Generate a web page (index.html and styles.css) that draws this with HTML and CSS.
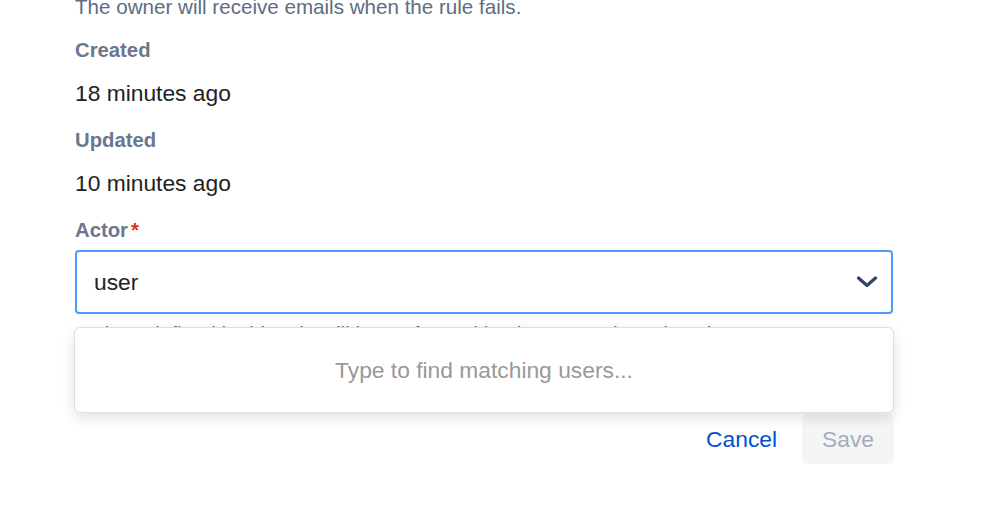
FILE: index.html
```html
<!DOCTYPE html>
<html lang="en">
<head>
<meta charset="utf-8">
<title>Rule details</title>
<link rel="stylesheet" href="styles.css">
</head>
<body>
<div class="page">
  <p class="help help-top">The owner will receive emails when the rule fails.</p>

  <div class="label label-first">Created</div>
  <div class="value">18 minutes ago</div>

  <div class="label">Updated</div>
  <div class="value">10 minutes ago</div>

  <div class="label">Actor<span class="req">*</span></div>
  <div class="field">
    <div class="select">
      <span class="select-value">user</span>
      <svg class="chevron" width="22" height="12" viewBox="0 0 22 12" aria-hidden="true">
        <path d="M2.5 2 L11 9.5 L19.5 2" fill="none" stroke="#344563" stroke-width="3.2" stroke-linecap="round" stroke-linejoin="round"/>
      </svg>
    </div>
    <div class="menu">
      <span class="menu-empty">Type to find matching users...</span>
    </div>
  </div>
  <p class="help help-field">Actions defined in this rule will be performed by the user selected as the actor.</p>

  <div class="actions">
    <button class="btn btn-link" type="button">Cancel</button>
    <button class="btn btn-disabled" type="button" disabled>Save</button>
  </div>
</div>
</body>
</html>
```

FILE: styles.css
```css
html, body {
  margin: 0;
  padding: 0;
  background: #ffffff;
}

body {
  font-family: "Liberation Sans", Arial, sans-serif;
  color: #222222;
  overflow: hidden;
}

.page {
  width: 818px;
  padding-left: 75px;
  display: flex;
  flex-direction: column;
}

.help {
  margin: 0;
  font-size: 20.6px;
  line-height: 24px;
  color: #5e6c84;
  white-space: nowrap;
}

.help-top {
  margin-top: -5px;
}

.help-field {
  margin-top: 8px;
}

.label {
  font-size: 20.3px;
  line-height: 24px;
  font-weight: 700;
  color: #6b778c;
  margin-top: 21px;
}

.label-first {
  margin-top: 19px;
}

.req {
  color: #de350b;
  margin-left: 3px;
}

.value {
  font-size: 22.8px;
  line-height: 28px;
  color: #222222;
  margin-top: 17px;
}

.field {
  position: relative;
  margin-top: 8px;
}

.select {
  box-sizing: border-box;
  height: 64px;
  border: 2px solid #4c9aff;
  border-radius: 4px;
  background: #ffffff;
  display: flex;
  align-items: center;
  justify-content: space-between;
  padding: 0 13px 0 17px;
}

.select-value {
  font-size: 22.8px;
  line-height: 28px;
  color: #222222;
}

.chevron {
  display: block;
}

.menu {
  position: absolute;
  top: calc(100% + 13px);
  left: -1px;
  right: -1px;
  height: 86px;
  box-sizing: border-box;
  background: #ffffff;
  border: 1px solid #dedede;
  border-radius: 6px;
  box-shadow: 0 5px 14px rgba(0, 0, 0, 0.12);
  display: flex;
  align-items: center;
  justify-content: center;
  z-index: 2;
}

.menu-empty {
  font-size: 22.8px;
  line-height: 28px;
  color: #999999;
}

.actions {
  display: flex;
  justify-content: flex-end;
  gap: 5px;
  margin-top: 68px;
  margin-right: -1px;
}

.btn {
  font-family: "Liberation Sans", Arial, sans-serif;
  font-size: 22.8px;
  height: 50px;
  padding: 0 20px;
  border: none;
  border-radius: 5px;
  background: transparent;
  cursor: pointer;
}

.btn-link {
  color: #0052cc;
}

.btn-disabled {
  background: #f4f5f7;
  color: #a5adba;
  cursor: default;
}
```
